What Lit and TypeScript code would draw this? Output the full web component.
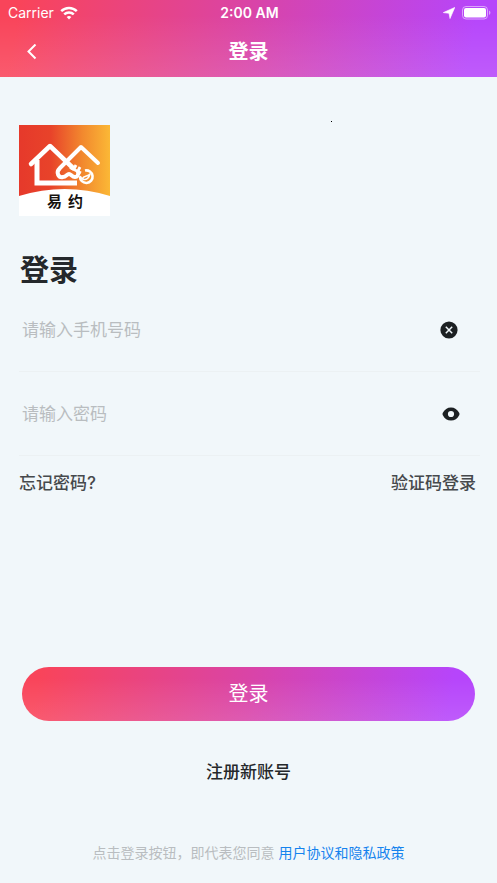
import { LitElement, html, css, svg } from "lit";
import { customElement, state } from "lit/decorators.js";

const wifi = svg`
  <path d="M9 13.6 6.7 11.1a3.4 3.4 0 0 1 4.6 0z" fill="#fff"/>
  <path d="M4.2 8.4a7 7 0 0 1 9.6 0M1.2 5.2a11.2 11.2 0 0 1 15.6 0" fill="none" stroke="#fff" stroke-width="2.5"/>`;

@customElement("app-root")
export class AppRoot extends LitElement {
  @state() private phone = "";
  @state() private reveal = false;

  static styles = css`
    :host {
      display: flex;
      flex-direction: column;
      position: relative;
      min-height: 100vh;
      box-sizing: border-box;
      background: #f1f7fa;
      color: #25282b;
      font-family: Inter, "Noto Sans CJK SC", sans-serif;
      font-size: 17px;
      line-height: 24px;
      --brand: linear-gradient(to bottom, rgba(255, 255, 255, 0) 20%, rgba(255, 255, 255, 0.12)),
        linear-gradient(100deg, #f9445a 4%, #d944a8 50%, #b645fb 94%);
    }
    button, input { font: inherit; color: inherit; border: 0; padding: 0; margin: 0; background: none; }
    button { cursor: pointer; }
    a { color: inherit; text-decoration: none; }
    svg { display: block; flex: none; }
    .header { background: var(--brand); color: #fff; }
    .status {
      display: grid;
      grid-template-columns: 1fr auto 1fr;
      align-items: center;
      height: 26px;
      padding: 0 6px 0 8px;
      font-size: 14px;
    }
    .carrier, .power { display: flex; align-items: center; gap: 6px; }
    .power { justify-content: flex-end; }
    .time { font-weight: 600; }
    .nav {
      display: grid;
      grid-template-columns: 1fr auto 1fr;
      align-items: center;
      height: 51px;
      padding: 0 24px;
    }
    .back { display: flex; width: 16px; }
    .nav h1 { margin: 0; font-size: 20px; font-weight: 700; }
    .speck { position: absolute; top: 121px; left: 331px; width: 1px; height: 1px; background: #000; }
    .main { display: flex; flex-direction: column; flex: 1; padding: 48px 17px 18px 19px; }
    .logo { align-self: flex-start; }
    .title { margin: 38px 0 0; padding-left: 1px; font-size: 29px; font-weight: 700; line-height: 34px; }
    .field {
      display: flex;
      align-items: center;
      height: 83px;
      padding: 0 20px 0 3px;
      border-bottom: 1px solid #ecf1f3;
    }
    .field.first { padding-right: 22px; }
    .field input { flex: 1; min-width: 0; outline: none; }
    .field input::placeholder { color: #b9bdc0; opacity: 1; }
    .links { display: flex; justify-content: space-between; margin-top: 15px; color: #46494c; padding-right: 4px; font-weight: 500; }
    .actions { display: flex; flex-direction: column; align-items: center; margin-top: auto; padding: 0 5px 0 3px; }
    .submit {
      align-self: stretch;
      height: 54px;
      border-radius: 27px;
      background: var(--brand);
      color: #fff;
      font-size: 20px;
    }
    .register { margin-top: 39px; font-weight: 500; }
    .terms { margin: 57px 0 0; font-size: 14px; color: #b9bdc0; }
    .terms a { color: #1583ee; }
  `;

  render() {
    return html`
      <header class="header">
        <div class="status">
          <span class="carrier">Carrier
            <svg width="18" height="14" viewBox="0 0 18 14">${wifi}</svg>
          </span>
          <span class="time">2:00 AM</span>
          <span class="power">
            <svg width="12" height="12" viewBox="0 0 12 12"><path d="M11.800.4 7 11.600 6 6.300.3 5.600z" fill="#fff" stroke="#fff" stroke-width=".6" stroke-linejoin="round"/></svg>
            <svg width="30" height="14" viewBox="0 0 30 14">
              <rect x="1.5" y=".5" width="25" height="12.5" rx="3.5" fill="none" stroke="#fff" stroke-opacity=".5"/>
              <rect x="3" y="2" width="22" height="9.5" rx="2" fill="#fff"/>
              <path d="M28 4.6a2.4 2.4 0 0 1 0 4.4z" fill="#fff" fill-opacity=".5"/>
            </svg>
          </span>
        </div>
        <nav class="nav">
          <button class="back" aria-label="返回">
            <svg width="16" height="16" viewBox="0 0 16 16"><path d="M11.500.5 4.500 7.500l7 7" fill="none" stroke="#fff" stroke-width="2"/></svg>
          </button>
          <h1>登录</h1>
        </nav>
      </header>
      <span class="speck"></span>
      <main class="main">
        <svg class="logo" width="91" height="91" viewBox="0 0 91 91" role="img" aria-label="易约">
          <defs>
            <linearGradient id="sun" x1="0" y1="0" x2="1" y2="0">
              <stop offset="0" stop-color="#e6392b"/><stop offset=".35" stop-color="#e8432a"/>
              <stop offset=".7" stop-color="#f2892e"/><stop offset="1" stop-color="#fbb836"/>
            </linearGradient>
          </defs>
          <rect width="91" height="91" fill="#fff"/>
          <path d="M0 0h91v71Q46 57 0 71z" fill="url(#sun)"/>
          <g fill="none" stroke="#fff" stroke-linejoin="round">
            <path d="M18 35v23h40" stroke-width="5" stroke-linejoin="miter"/>
            <path d="M12 39 31 21 54 43" stroke-width="4.500" stroke-linecap="round"/>
            <path d="M79 38 62 22 41 43c-5 5-1 10 3 9 3 0 4-3 6-3s3 3 6 3c2 0 4-2 3-5" stroke-width="4" stroke-linecap="round"/>
            <path d="M51 42.500 62 48M55 44l2-4M59 46l2-4" stroke-width="2.800"/>
            <path d="M66 45.500a6.300 6.300 0 1 1-5 6" stroke-width="2.600"/>
            <path d="M61 51c2 5 8 5 10-2-2 3-6 1-8 5" stroke-width="1.600"/>
          </g>
          <text x="28" y="82" font-size="15" font-weight="700" fill="#16120f">易</text>
          <text x="49" y="82" font-size="15" font-weight="700" fill="#16120f">约</text>
        </svg>
        <h2 class="title">登录</h2>
        <div class="field first">
          <input type="tel" aria-label="手机号码" placeholder="请输入手机号码" .value=${this.phone}
            @input=${(e: Event) => (this.phone = (e.target as HTMLInputElement).value)} />
          <button aria-label="清除" @click=${() => (this.phone = "")}>
            <svg width="18" height="18" viewBox="0 0 18 18"><circle cx="9" cy="9" r="8.6" fill="#1c2022"/><path d="m5.8 5.8 6.4 6.4m0-6.4-6.4 6.4" stroke="#f1f7fa" stroke-width="1.5"/></svg>
          </button>
        </div>
        <div class="field">
          <input type=${this.reveal ? "text" : "password"} aria-label="密码" placeholder="请输入密码" />
          <button aria-label="显示密码" @click=${() => (this.reveal = !this.reveal)}>
            <svg width="18" height="14" viewBox="0 0 18 14"><path fill-rule="evenodd" d="M9 .5c3.6 0 6.500 2 8.300 5.600q.4.900 0 1.800C15.500 11.500 12.600 13.500 9 13.500S2.500 11.500.7 7.900q-.4-.9 0-1.800C2.500 2.500 5.400.5 9 .5zm0 3.400a3.100 3.100 0 1 0 0 6.200 3.100 3.100 0 0 0 0-6.200z" fill="#1c2022"/></svg>
          </button>
        </div>
        <div class="links"><a href="#forgot">忘记密码?</a><a href="#code">验证码登录</a></div>
        <div class="actions">
          <button class="submit">登录</button>
          <a class="register" href="#register">注册新账号</a>
          <p class="terms">点击登录按钮，即代表您同意 <a href="#terms">用户协议和隐私政策</a></p>
        </div>
      </main>
    `;
  }
}
